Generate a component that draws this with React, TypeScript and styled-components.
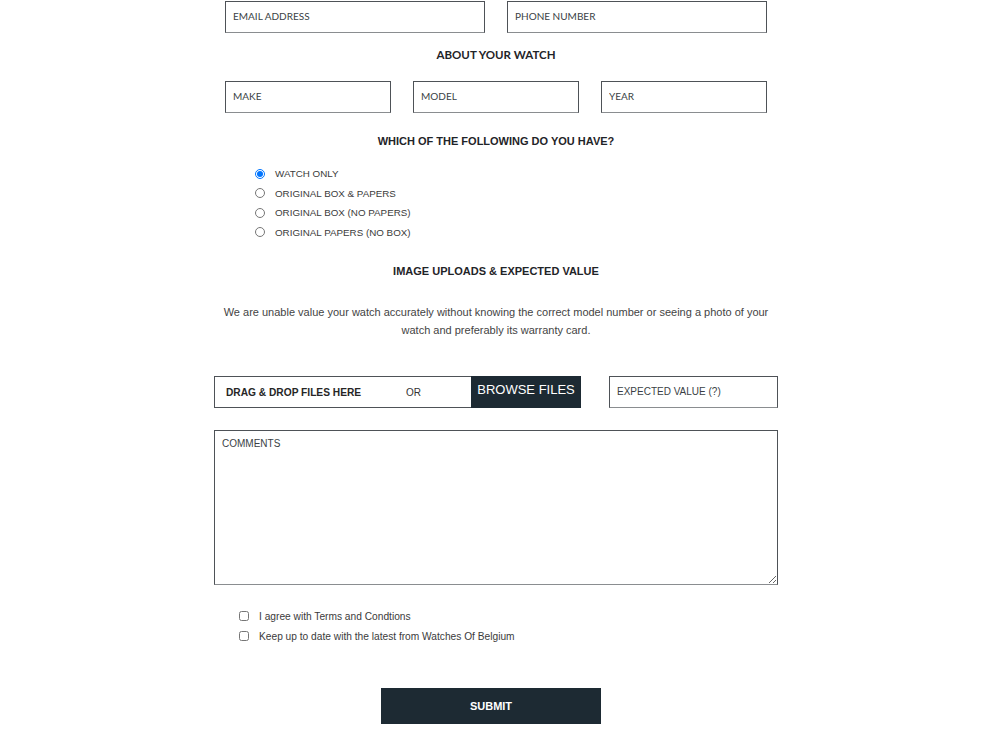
import React from "react";
import styled, { createGlobalStyle } from "styled-components";

const Global = createGlobalStyle`
  html, body { margin: 0; padding: 0; background: #fff; }
  body { font-family: "Liberation Sans", Arial, sans-serif; color: #333; }
  * { box-sizing: border-box; }
`;

const Page = styled.div`
  width: 1000px;
  padding-top: 1px;
  display: flex;
  flex-direction: column;
  align-items: center;
`;

const Narrow = styled.div`
  width: 542px;
  margin-left: -8px;
  display: flex;
  flex-direction: column;
`;

const Wide = styled.div`
  width: 564px;
  margin-left: -8px;
  display: flex;
  flex-direction: column;
`;

const Row = styled.div<{ $cols: number; $mt?: number }>`
  margin-top: ${(p) => p.$mt ?? 0}px;
  display: grid;
  grid-template-columns: repeat(${(p) => p.$cols}, 1fr);
  column-gap: 22px;
`;

const TextInput = styled.input`
  height: 32px;
  width: 100%;
  border: 1px solid #4e5257;
  border-bottom-color: #8a8d90;
  padding: 0 0 2px 7px;
  font-family: Lato, "Liberation Sans", sans-serif;
  font-size: 10px;
  color: #333;
  outline: none;
  &::placeholder { color: #3a3f45; opacity: 1; }
`;

const Heading = styled.div<{ $font?: string; $mt: number }>`
  margin-top: ${(p) => p.$mt}px;
  height: 14px;
  line-height: 14px;
  text-align: center;
  font-weight: bold;
  font-size: ${(p) => (p.$font === "lato" ? "11.5px" : "11px")};
  font-family: ${(p) => (p.$font === "lato" ? 'Lato, "Liberation Sans", sans-serif' : '"Liberation Sans", Arial, sans-serif')};
  color: #1f2428;
`;

const OptionList = styled.div`
  margin-top: 16px;
  padding-left: 29px;
  display: flex;
  flex-direction: column;
`;

const Option = styled.label`
  display: flex;
  align-items: center;
  height: 19.5px;
  font-size: 9.8px;
  color: #3b3b3b;
  gap: 10px;
  input { margin: 0 0 0 1px; width: 10px; height: 10px; }
`;

const Para = styled.p`
  margin: 25px 0 0;
  text-align: center;
  font-size: 11px;
  line-height: 18px;
  color: #444;
`;

const UploadRow = styled.div`
  margin-top: 37px;
  display: flex;
  gap: 28px;
`;

const DropZone = styled.div`
  width: 367px;
  height: 32px;
  border: 1px solid #4e5257;
  display: flex;
  align-items: stretch;
`;

const DropText = styled.span`
  display: flex;
  align-items: center;
  padding-left: 11px;
  font-size: 10.2px;
  font-weight: bold;
  color: #262626;
  width: 191px;
`;

const OrText = styled.span`
  display: flex;
  align-items: center;
  font-size: 10px;
  color: #333;
  flex: 1;
`;

const Browse = styled.button`
  width: 110px;
  margin: -1px -1px -1px 0;
  border: none;
  background: #1d2a33;
  color: #fff;
  font-family: "Liberation Sans", Arial, sans-serif;
  font-size: 13px;
  padding: 0 0 5px;
  cursor: pointer;
`;

const ValueInput = styled(TextInput)`
  width: 169px;
  font-family: "Liberation Sans", Arial, sans-serif;
  font-size: 10px;
`;

const Comments = styled.textarea`
  margin-top: 22px;
  width: 564px;
  height: 155px;
  border: 1px solid #4e5257;
  border-bottom-color: #8a8d90;
  padding: 7px 7px;
  font-family: "Liberation Sans", Arial, sans-serif;
  font-size: 10px;
  outline: none;
  &::placeholder { color: #3a3f45; opacity: 1; }
`;

const Checks = styled.div`
  margin-top: 21px;
  padding-left: 25px;
  display: flex;
  flex-direction: column;
`;

const Check = styled.label`
  display: flex;
  align-items: center;
  height: 20px;
  gap: 10px;
  font-size: 10.2px;
  color: #3b3b3b;
  input { margin: 0; width: 10px; height: 10px; }
`;

const Submit = styled.button`
  margin-top: 42px;
  margin-left: -18px;
  width: 220px;
  height: 36px;
  border: none;
  background: #1d2a33;
  color: #fff;
  font-family: "Liberation Sans", Arial, sans-serif;
  font-weight: bold;
  font-size: 11px;
  cursor: pointer;
`;

const options = [
  "WATCH ONLY",
  "ORIGINAL BOX & PAPERS",
  "ORIGINAL BOX (NO PAPERS)",
  "ORIGINAL PAPERS (NO BOX)",
];

export default function App() {
  return (
    <>
      <Global />
      <Page>
        <Narrow>
          <Row $cols={2}>
            <TextInput placeholder="EMAIL ADDRESS" />
            <TextInput placeholder="PHONE NUMBER" />
          </Row>
          <Heading $font="lato" $mt={15}>ABOUT YOUR WATCH</Heading>
          <Row $cols={3} $mt={19}>
            <TextInput placeholder="MAKE" />
            <TextInput placeholder="MODEL" />
            <TextInput placeholder="YEAR" />
          </Row>
          <Heading $mt={21}>WHICH OF THE FOLLOWING DO YOU HAVE?</Heading>
          <OptionList>
            {options.map((o, i) => (
              <Option key={o}>
                <input type="radio" name="have" defaultChecked={i === 0} />
                {o}
              </Option>
            ))}
          </OptionList>
          <Heading $mt={22}>IMAGE UPLOADS &amp; EXPECTED VALUE</Heading>
        </Narrow>
        <Wide>
          <Para>
            We are unable value your watch accurately without knowing the correct model number or seeing a photo of your
            <br />
            watch and preferably its warranty card.
          </Para>
          <UploadRow>
            <DropZone>
              <DropText>DRAG &amp; DROP FILES HERE</DropText>
              <OrText>OR</OrText>
              <Browse>BROWSE FILES</Browse>
            </DropZone>
            <ValueInput placeholder="EXPECTED VALUE (?)" />
          </UploadRow>
          <Comments placeholder="COMMENTS" />
          <Checks>
            <Check>
              <input type="checkbox" />
              I agree with Terms and Condtions
            </Check>
            <Check>
              <input type="checkbox" />
              Keep up to date with the latest from Watches Of Belgium
            </Check>
          </Checks>
        </Wide>
        <Submit>SUBMIT</Submit>
      </Page>
    </>
  );
}
